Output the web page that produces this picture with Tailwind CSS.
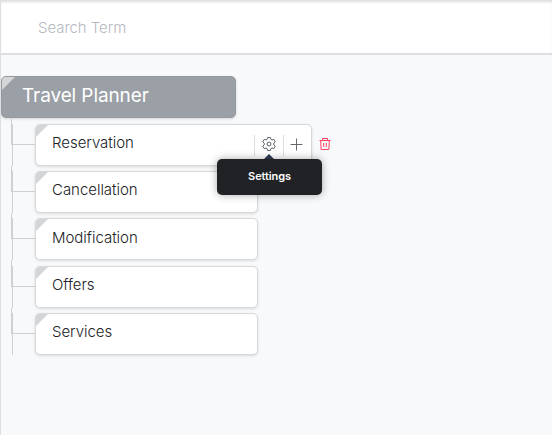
<!DOCTYPE html>
<html lang="en">
<head>
<meta charset="utf-8">
<title>Travel Planner</title>
<script src="https://cdn.jsdelivr.net/npm/@tailwindcss/browser@4"></script>
</head>
<body class="h-[435px] w-[552px] overflow-hidden border-l border-[#dedfe1] bg-[#f8f9fb] font-['Inter',sans-serif] text-[#212226]">
<header class="flex h-[55px] items-center border-b-2 border-[#dcdee1] bg-white pl-[37px] pt-[3px] shadow-[inset_0_3px_3px_-1px_#dddddd]">
  <input class="w-80 text-[15px] font-light tracking-[-0.05px] outline-none placeholder:text-[#b6b8bf]" placeholder="Search Term">
</header>
<main class="pt-[21px]">
  <h1 class="relative flex h-[42px] w-[235px] items-center overflow-hidden rounded-[5px] border border-[#969aa0] bg-[#9b9fa6] pb-px pl-[20px] text-[19px] font-normal tracking-[-0.1px] text-white shadow-[0_1px_3px_#00000026]"><span class="absolute left-0 top-0 size-[13px] bg-[#d3d5d7] [clip-path:polygon(0_0,100%_0,0_100%)]"></span>Travel Planner</h1>
  <ul class="flex flex-col pt-[6px] pl-[11px] text-[15px] font-light tracking-[-0.03px]">
    <li class="relative mb-[5px] flex h-[42px] border-l border-[#cfd0d2] pl-[22px]">
      <span class="absolute -left-[2px] -top-[6px] h-[27px] w-[25px] border-b border-l border-[#cfd0d2]"></span>
      <div class="relative flex w-[277px] items-center overflow-hidden rounded-[5px] border border-[#d7d8da] bg-white pl-4 shadow-[0_1px_3px_#00000020]"><span class="absolute left-0 top-0 size-[12px] bg-[#d3d5d7] [clip-path:polygon(0_0,100%_0,0_100%)]"></span><span class="grow pb-[3px]">Reservation</span>
        <button class="flex h-[21px] w-[29px] items-center justify-center border-l border-[#dcddde] pr-px pb-[2px] text-[#5d6168]" aria-label="Settings">
          <svg class="size-[14px]" viewBox="0 0 14 14" fill="none" stroke="currentColor" stroke-linejoin="round"><path d="M5.6 .5h2.8l.4 1.8 1.2.7 1.8-.6 1.4 2.4-1.4 1.3v1.8l1.4 1.3-1.4 2.4-1.8-.6-1.2.7-.4 1.8H5.6l-.4-1.8-1.2-.7-1.8.6L.8 9.2l1.4-1.3V6.1L.8 4.8l1.4-2.4 1.8.6 1.2-.7z"/><circle cx="7" cy="7" r="2"/></svg>
        </button>
        <button class="flex h-[21px] w-[28px] items-center justify-center border-l border-[#dcddde] pr-[2px] pb-px text-[#66696f]" aria-label="Add">
          <svg class="size-[13px]" viewBox="0 0 13 13" stroke="currentColor"><path d="M6.5 .5v12M.5 6.5h12"/></svg>
        </button>
      </div>
      <button class="ml-[7px] mt-[13px] size-[13px] text-[#ff4060]" aria-label="Delete">
        <svg class="size-[12px]" viewBox="0 0 12 12" fill="none" stroke="currentColor"><path d="M.5 2.5h11M3.5 2.5v-2h5v2M1.7 2.5l.4 9h7.8l.4-9M4.7 5v4M7.3 5v4"/></svg>
      </button>
      <div class="absolute left-[204px] top-[35px] z-10 flex h-[36px] w-[105px] items-center justify-center rounded-[5px] bg-[#202225] pb-[2px] text-[11px] font-semibold tracking-[-0.1px] text-white shadow-[0_0_8px_#00000055]"><span class="absolute -top-[5px] left-[47px] h-[5px] w-[10px] bg-[#29364a] [clip-path:polygon(50%_0,100%_100%,0_100%)]"></span>Settings</div>
    </li>
    <li class="relative mb-[5px] flex h-[42px] border-l border-[#cfd0d2] pl-[22px]">
      <span class="absolute -left-[2px] -top-[5px] h-[26px] w-[25px] border-b border-l border-[#cfd0d2]"></span>
      <div class="relative flex w-[223px] items-center overflow-hidden rounded-[5px] border border-[#d7d8da] bg-white pb-[3px] pl-4 shadow-[0_1px_3px_#00000020]"><span class="absolute left-0 top-0 size-[12px] bg-[#d3d5d7] [clip-path:polygon(0_0,100%_0,0_100%)]"></span>Cancellation</div>
    </li>
    <li class="relative mb-[6px] flex h-[42px] border-l border-[#cfd0d2] pl-[22px]">
      <span class="absolute -left-[2px] -top-[5px] h-[26px] w-[25px] border-b border-l border-[#cfd0d2]"></span>
      <div class="relative flex w-[223px] items-center overflow-hidden rounded-[5px] border border-[#d7d8da] bg-white pb-px pl-4 shadow-[0_1px_3px_#00000020]"><span class="absolute left-0 top-0 size-[12px] bg-[#d3d5d7] [clip-path:polygon(0_0,100%_0,0_100%)]"></span>Modification</div>
    </li>
    <li class="relative mb-[5px] flex h-[42px] border-l border-[#cfd0d2] pl-[22px]">
      <span class="absolute -left-[2px] -top-[6px] h-[27px] w-[25px] border-b border-l border-[#cfd0d2]"></span>
      <div class="relative flex w-[223px] items-center overflow-hidden rounded-[5px] border border-[#d7d8da] bg-white pb-[3px] pl-4 shadow-[0_1px_3px_#00000020]"><span class="absolute left-0 top-0 size-[12px] bg-[#d3d5d7] [clip-path:polygon(0_0,100%_0,0_100%)]"></span>Offers</div>
    </li>
    <li class="relative flex h-[42px] border-l border-[#cfd0d2] pl-[22px]">
      <span class="absolute -left-[2px] -top-[5px] h-[26px] w-[25px] border-b border-l border-[#cfd0d2]"></span>
      <div class="relative flex w-[223px] items-center overflow-hidden rounded-[5px] border border-[#d7d8da] bg-white pb-[3px] pl-4 shadow-[0_1px_3px_#00000020]"><span class="absolute left-0 top-0 size-[12px] bg-[#d3d5d7] [clip-path:polygon(0_0,100%_0,0_100%)]"></span>Services</div>
    </li>
  </ul>
</main>
</body>
</html>
